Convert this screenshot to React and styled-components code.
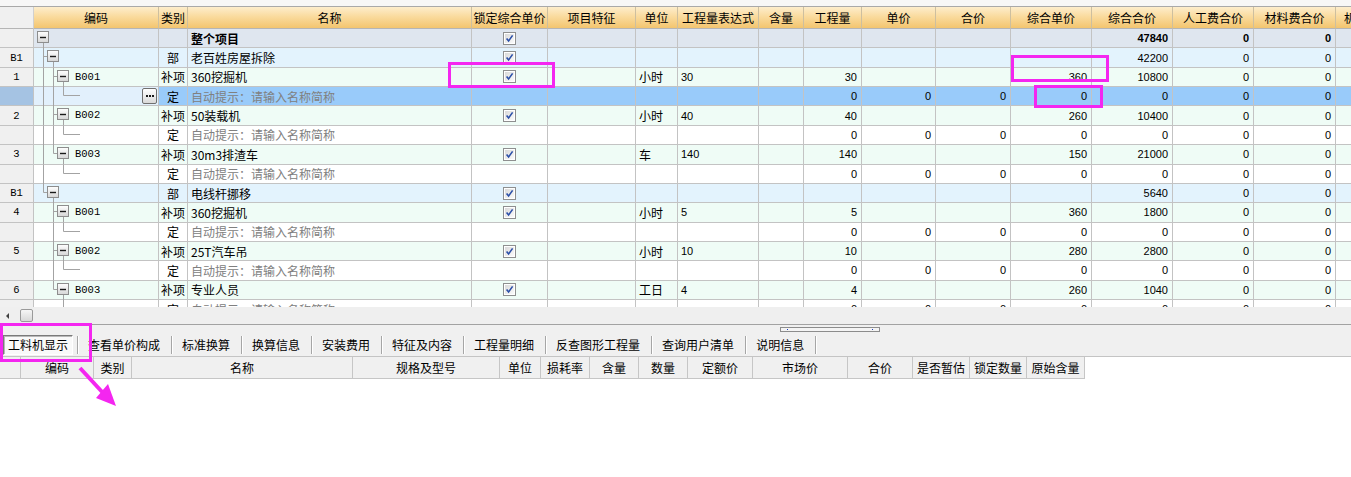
import React from 'react';
import styled, { createGlobalStyle } from 'styled-components';

const GlobalStyle = createGlobalStyle`
  html, body {
    margin: 0;
    padding: 0;
    background: #ffffff;
  }
  body {
    font-family: "Noto Sans CJK SC", "Liberation Sans", sans-serif;
    font-size: 12px;
    color: #000;
  }
`;

const LINE = '#a3a3a3';
const GRID = '#c3c3c3';

const COLS = [
  { key: 'no', title: '', w: 34, align: 'center', mono: true },
  { key: 'code', title: '编码', w: 125 },
  { key: 'type', title: '类别', w: 29, align: 'center' },
  { key: 'name', title: '名称', w: 284 },
  { key: 'lock', title: '锁定综合单价', w: 76, align: 'center' },
  { key: 'feat', title: '项目特征', w: 88 },
  { key: 'unit', title: '单位', w: 42 },
  { key: 'expr', title: '工程量表达式', w: 81, num: true, align: 'left' },
  { key: 'ratio', title: '含量', w: 45 },
  { key: 'qty', title: '工程量', w: 58, num: true, align: 'right' },
  { key: 'price', title: '单价', w: 74, num: true, align: 'right' },
  { key: 'sum', title: '合价', w: 75, num: true, align: 'right' },
  { key: 'uprice', title: '综合单价', w: 81, num: true, align: 'right' },
  { key: 'total', title: '综合合价', w: 81, num: true, align: 'right' },
  { key: 'labor', title: '人工费合价', w: 81, num: true, align: 'right' },
  { key: 'mat', title: '材料费合价', w: 82, num: true, align: 'right' },
  { key: 'mach', title: '机械费合价', w: 76, num: true, align: 'right' },
];

const ZEROS = { qty: '0', price: '0', sum: '0', uprice: '0', total: '0', labor: '0', mat: '0' };
const HINT = '自动提示：请输入名称简称';

const ROWS = [
  { kind: 'root', tree: { box: 0, down: true }, name: '整个项目', lock: true, total: '47840', labor: '0', mat: '0' },
  { kind: 'part', no: 'B1', tree: { rails: [[0, 'full']], box: 1, down: true }, type: '部', name: '老百姓房屋拆除', lock: true, total: '42200', labor: '0', mat: '0' },
  { kind: 'item', no: '1', tree: { rails: [[0, 'full'], [1, 'full']], box: 2, down: true }, code: 'B001', type: '补项', name: '360挖掘机', lock: true, unit: '小时', expr: '30', qty: '30', uprice: '360', total: '10800', labor: '0', mat: '0' },
  { kind: 'quota', selected: true, more: true, tree: { rails: [[0, 'full'], [1, 'full']], leaf: 2 }, type: '定', name: HINT, ...ZEROS },
  { kind: 'item', no: '2', tree: { rails: [[0, 'full'], [1, 'full']], box: 2, down: true }, code: 'B002', type: '补项', name: '50装载机', lock: true, unit: '小时', expr: '40', qty: '40', uprice: '260', total: '10400', labor: '0', mat: '0' },
  { kind: 'quota', tree: { rails: [[0, 'full'], [1, 'full']], leaf: 2 }, type: '定', name: HINT, ...ZEROS },
  { kind: 'item', no: '3', tree: { rails: [[0, 'full'], [1, 'half']], box: 2, down: true }, code: 'B003', type: '补项', name: '30m3排渣车', lock: true, unit: '车', expr: '140', qty: '140', uprice: '150', total: '21000', labor: '0', mat: '0' },
  { kind: 'quota', tree: { rails: [[0, 'full']], leaf: 2 }, type: '定', name: HINT, ...ZEROS },
  { kind: 'part', no: 'B1', tree: { rails: [[0, 'half']], box: 1, down: true }, type: '部', name: '电线杆挪移', lock: true, total: '5640', labor: '0', mat: '0' },
  { kind: 'item', no: '4', tree: { rails: [[1, 'full']], box: 2, down: true }, code: 'B001', type: '补项', name: '360挖掘机', lock: true, unit: '小时', expr: '5', qty: '5', uprice: '360', total: '1800', labor: '0', mat: '0' },
  { kind: 'quota', tree: { rails: [[1, 'full']], leaf: 2 }, type: '定', name: HINT, ...ZEROS },
  { kind: 'item', no: '5', tree: { rails: [[1, 'full']], box: 2, down: true }, code: 'B002', type: '补项', name: '25T汽车吊', lock: true, unit: '小时', expr: '10', qty: '10', uprice: '280', total: '2800', labor: '0', mat: '0' },
  { kind: 'quota', tree: { rails: [[1, 'full']], leaf: 2 }, type: '定', name: HINT, ...ZEROS },
  { kind: 'item', no: '6', tree: { rails: [[1, 'half']], box: 2, down: true }, code: 'B003', type: '补项', name: '专业人员', lock: true, unit: '工日', expr: '4', qty: '4', uprice: '260', total: '1040', labor: '0', mat: '0' },
  { kind: 'quota', tree: { leaf: 2 }, type: '定', name: HINT, ...ZEROS },
];

const TABS = ['工料机显示', '查看单价构成', '标准换算', '换算信息', '安装费用', '特征及内容', '工程量明细', '反查图形工程量', '查询用户清单', '说明信息'];

const SUB_COLS = [
  { title: '', w: 21 },
  { title: '编码', w: 73 },
  { title: '类别', w: 38 },
  { title: '名称', w: 221 },
  { title: '规格及型号', w: 147 },
  { title: '单位', w: 41 },
  { title: '损耗率', w: 49 },
  { title: '含量', w: 49 },
  { title: '数量', w: 49 },
  { title: '定额价', w: 65 },
  { title: '市场价', w: 95 },
  { title: '合价', w: 65 },
  { title: '是否暂估', w: 57 },
  { title: '锁定数量', w: 57 },
  { title: '原始含量', w: 58 },
];

const KIND_BG = {
  root: '#dfe6ef',
  part: '#e3f3fd',
  item: '#effcf6',
  quota: '#ffffff',
};

const Page = styled.div`
  position: relative;
  width: 1351px;
  height: 477px;
  overflow: hidden;
  display: flex;
  flex-direction: column;
  background: #ffffff;
`;

const TopStrip = styled.div`
  flex: none;
  height: 6px;
  background: #f7f7f7;
  border-bottom: 1px solid #a9a9a9;
`;

const Viewport = styled.div`
  flex: none;
  height: 300px;
  overflow: hidden;
`;

const HeaderRow = styled.div`
  display: flex;
  height: 22px;
`;

const HeadCell = styled.div`
  flex: none;
  width: ${(p) => p.$w}px;
  box-sizing: border-box;
  height: 100%;
  border-right: 1px solid ${(p) => (p.$plain ? '#d0d0d0' : '#cdbf9f')};
  border-bottom: 1px solid #b5b5b5;
  display: flex;
  align-items: center;
  justify-content: ${(p) => (p.$clip ? 'flex-start' : 'center')};
  padding-left: ${(p) => (p.$clip ? '8px' : '0')};
  white-space: nowrap;
  overflow: hidden;
  background: ${(p) =>
    p.$plain ? '#f0f0f0' : 'linear-gradient(to bottom, #fdedcc 0%, #fadb9e 45%, #f3c56f 100%)'};
`;

const Row = styled.div`
  display: flex;
  height: 19.36px;
  background: ${(p) => (p.$selected ? '#99cbfa' : KIND_BG[p.$kind])};
  font-weight: ${(p) => (p.$kind === 'root' ? 'bold' : 'normal')};
`;

const Cell = styled.div`
  flex: none;
  width: ${(p) => p.$w}px;
  box-sizing: border-box;
  height: 100%;
  border-right: 1px solid ${GRID};
  border-bottom: 1px solid ${GRID};
  display: flex;
  align-items: center;
  justify-content: ${(p) =>
    p.$align === 'right' ? 'flex-end' : p.$align === 'center' ? 'center' : 'flex-start'};
  padding: 0 ${(p) => (p.$align === 'right' ? '4px' : '3px')};
  white-space: nowrap;
  overflow: hidden;
  background: ${(p) => p.$bg || 'transparent'};
  color: ${(p) => (p.$muted ? '#808080' : '#000')};
  font-family: ${(p) =>
    p.$mono
      ? '"Liberation Mono", monospace'
      : p.$num
      ? '"Liberation Sans", Arial, sans-serif'
      : 'inherit'};
  font-size: ${(p) => (p.$mono ? '10.5px' : p.$num ? '11px' : '12px')};
`;

const TreeCell = styled(Cell)`
  padding: 0 1px 0 0;
  align-items: flex-start;
  overflow: visible;
`;

const TreeSvg = styled.svg`
  flex: none;
  overflow: visible;
`;

const CodeText = styled.span`
  font-family: "Liberation Mono", monospace;
  font-size: 10.5px;
  font-weight: normal;
  line-height: 18px;
`;

const MoreButton = styled.div`
  margin: 1px 0 0 auto;
  width: 15px;
  height: 16px;
  box-sizing: border-box;
  border: 1px solid #6f6f6f;
  border-radius: 2px;
  background: linear-gradient(to bottom, #ffffff, #d9d9d9);
  display: flex;
  align-items: center;
  justify-content: center;
  gap: 1px;
`;

const Dot = styled.span`
  width: 2px;
  height: 2px;
  background: #1a1a1a;
`;

const HScroll = styled.div`
  flex: none;
  height: 17px;
  background: #efefef;
  display: flex;
  align-items: center;
  padding-left: 6px;
`;

const ArrowLeft = styled.div`
  width: 0;
  height: 0;
  border-top: 3px solid transparent;
  border-bottom: 3px solid transparent;
  border-right: 3px solid #404040;
  margin-right: 11px;
`;

const Thumb = styled.div`
  width: 13px;
  height: 13px;
  box-sizing: border-box;
  border: 1px solid #9a9a9a;
  border-radius: 2px;
  background: linear-gradient(to bottom, #f6f6f6, #d8d8d8);
`;

const TabPanel = styled.div`
  flex: none;
  height: 31px;
  background: #f0f0f0;
  border-top: 1px solid #a2a2a2;
  border-bottom: 1px solid #c4c4c4;
  display: flex;
  flex-direction: column;
`;

const MiniScroll = styled.div`
  margin: 2px 0 0 780px;
  width: 100px;
  height: 5px;
  box-sizing: border-box;
  border: 1px solid #8c8c8c;
  background: #f4f4f4;
  display: flex;
  justify-content: space-between;
  align-items: center;
  padding: 0 6px;
`;

const MiniDot = styled.span`
  width: 1px;
  height: 1px;
  background: #2040c0;
`;

const TabRow = styled.div`
  display: flex;
  align-items: center;
  height: 23px;
  margin-top: 1px;
`;

const Tab = styled.div`
  flex: none;
  height: 18px;
  display: flex;
  align-items: center;
  padding: ${(p) => (p.$active ? '0 4px 0 3px' : '0 11px 0 10px')};
  border-right: 1px solid #a6a6a6;
  box-shadow: 1px 0 0 #ffffff;
  font-size: 12px;
  white-space: nowrap;
`;

const ActiveLabel = styled.div`
  width: 70px;
  height: 20px;
  box-sizing: border-box;
  display: flex;
  align-items: center;
  justify-content: center;
  background: #f9f9f9;
  border: 1px solid;
  border-color: #7a7a7a #ffffff #ffffff #7a7a7a;
  box-shadow: inset 1px 1px 0 #b8b8b8;
`;

const SubHeader = styled.div`
  flex: none;
  display: flex;
  height: 22px;
`;

const SubCell = styled.div`
  flex: none;
  width: ${(p) => p.$w}px;
  box-sizing: border-box;
  height: 100%;
  background: #f0f0f0;
  border-right: 1px solid #c6c6c6;
  border-bottom: 1px solid #c6c6c6;
  display: flex;
  align-items: center;
  justify-content: center;
  white-space: nowrap;
  font-size: 12px;
`;

const Annotations = styled.svg`
  position: absolute;
  left: 0;
  top: 0;
  pointer-events: none;
`;

const cx = (l) => 9.5 + 10 * l;

const MinusBox = ({ level }) => {
  const x = 3 + 10 * level;
  return (
    <g>
      <rect x={x + 0.5} y="2.5" width="11" height="11" fill="url(#boxFill)" stroke="#8d8d8d" />
      <line x1={x + 3} y1="8.5" x2={x + 9} y2="8.5" stroke="#1a1a1a" strokeWidth="1.4" />
    </g>
  );
};

const TreeGlyph = ({ tree }) => {
  const { rails = [], box, down, leaf } = tree;
  return (
    <TreeSvg width="41" height="19" viewBox="0 0 41 19">
      <defs>
        <linearGradient id="boxFill" x1="0" y1="0" x2="0" y2="1">
          <stop offset="0" stopColor="#ffffff" />
          <stop offset="1" stopColor="#d6d6d6" />
        </linearGradient>
      </defs>
      {rails.map(([l, kind]) => (
        <line key={l} x1={cx(l)} y1="0" x2={cx(l)} y2={kind === 'full' ? 19.5 : 8.5} stroke={LINE} />
      ))}
      {box > 0 && <line x1={cx(box - 1)} y1="8.5" x2={3 + 10 * box} y2="8.5" stroke={LINE} />}
      {leaf != null && (
        <>
          <line x1={cx(leaf)} y1="0" x2={cx(leaf)} y2="8.5" stroke={LINE} />
          <line x1={cx(leaf)} y1="8.5" x2="46" y2="8.5" stroke={LINE} />
        </>
      )}
      {down && <line x1={cx(box)} y1="14" x2={cx(box)} y2="19.5" stroke={LINE} />}
      {box != null && <MinusBox level={box} />}
    </TreeSvg>
  );
};

const CheckBox = () => (
  <svg width="13" height="13" viewBox="0 0 13 13">
    <defs>
      <linearGradient id="cbFill" x1="0" y1="0" x2="1" y2="1">
        <stop offset="0" stopColor="#d9d9d9" />
        <stop offset="1" stopColor="#fbfbfb" />
      </linearGradient>
    </defs>
    <rect x="0.5" y="0.5" width="12" height="12" fill="#ffffff" stroke="#8e8f8f" />
    <rect x="2" y="2" width="9" height="9" fill="url(#cbFill)" />
    <path d="M3.6 6.4 L5.6 9 L9.6 3.4" fill="none" stroke="#2b4fa8" strokeWidth="1.6" />
  </svg>
);

const GridRow = ({ row }) => (
  <Row $kind={row.kind} $selected={row.selected}>
    {COLS.map((c) => {
      if (c.key === 'code') {
        return (
          <TreeCell key={c.key} $w={c.w} $bg={row.selected ? '#e2f0fc' : undefined}>
            <TreeGlyph tree={row.tree} />
            {row.code && <CodeText>{row.code}</CodeText>}
            {row.more && (
              <MoreButton>
                <Dot />
                <Dot />
                <Dot />
              </MoreButton>
            )}
          </TreeCell>
        );
      }
      if (c.key === 'no') {
        return (
          <Cell key={c.key} $w={c.w} $align="center" $mono $bg={row.selected ? '#a5c3e3' : '#f0f0f0'}>
            {row.no}
          </Cell>
        );
      }
      if (c.key === 'lock') {
        return (
          <Cell key={c.key} $w={c.w} $align="center">
            {row.lock && <CheckBox />}
          </Cell>
        );
      }
      return (
        <Cell
          key={c.key}
          $w={c.w}
          $align={c.align}
          $num={c.num}
          $muted={c.key === 'name' && row.kind === 'quota'}
        >
          {row[c.key]}
        </Cell>
      );
    })}
  </Row>
);

const App = () => (
  <Page>
    <GlobalStyle />
    <TopStrip />
    <Viewport>
      <HeaderRow>
        {COLS.map((c) => (
          <HeadCell key={c.key} $w={c.w} $plain={c.key === 'no'} $clip={c.key === 'mach'}>
            {c.title}
          </HeadCell>
        ))}
      </HeaderRow>
      {ROWS.map((r, i) => (
        <GridRow key={i} row={r} />
      ))}
    </Viewport>
    <HScroll>
      <ArrowLeft />
      <Thumb />
    </HScroll>
    <TabPanel>
      <MiniScroll>
        <MiniDot />
        <MiniDot />
      </MiniScroll>
      <TabRow>
        {TABS.map((t, i) =>
          i === 0 ? (
            <Tab key={t} $active>
              <ActiveLabel>{t}</ActiveLabel>
            </Tab>
          ) : (
            <Tab key={t}>{t}</Tab>
          )
        )}
      </TabRow>
    </TabPanel>
    <SubHeader>
      {SUB_COLS.map((c, i) => (
        <SubCell key={i} $w={c.w}>
          {c.title}
        </SubCell>
      ))}
    </SubHeader>

    <Annotations width="1351" height="477" viewBox="0 0 1351 477">
      <g fill="none" stroke="#f426f0" strokeWidth="3">
        <rect x="449.5" y="63.5" width="104" height="23" />
        <rect x="1012.5" y="56.5" width="95" height="24" />
        <rect x="1035.5" y="86.5" width="66" height="20" />
        <rect x="1.5" y="324.5" width="89" height="36" />
        <line x1="80" y1="368" x2="104" y2="394" strokeWidth="4" />
      </g>
      <polygon points="116,406 96,398 108,384" fill="#f426f0" />
    </Annotations>
  </Page>
);

export default App;
